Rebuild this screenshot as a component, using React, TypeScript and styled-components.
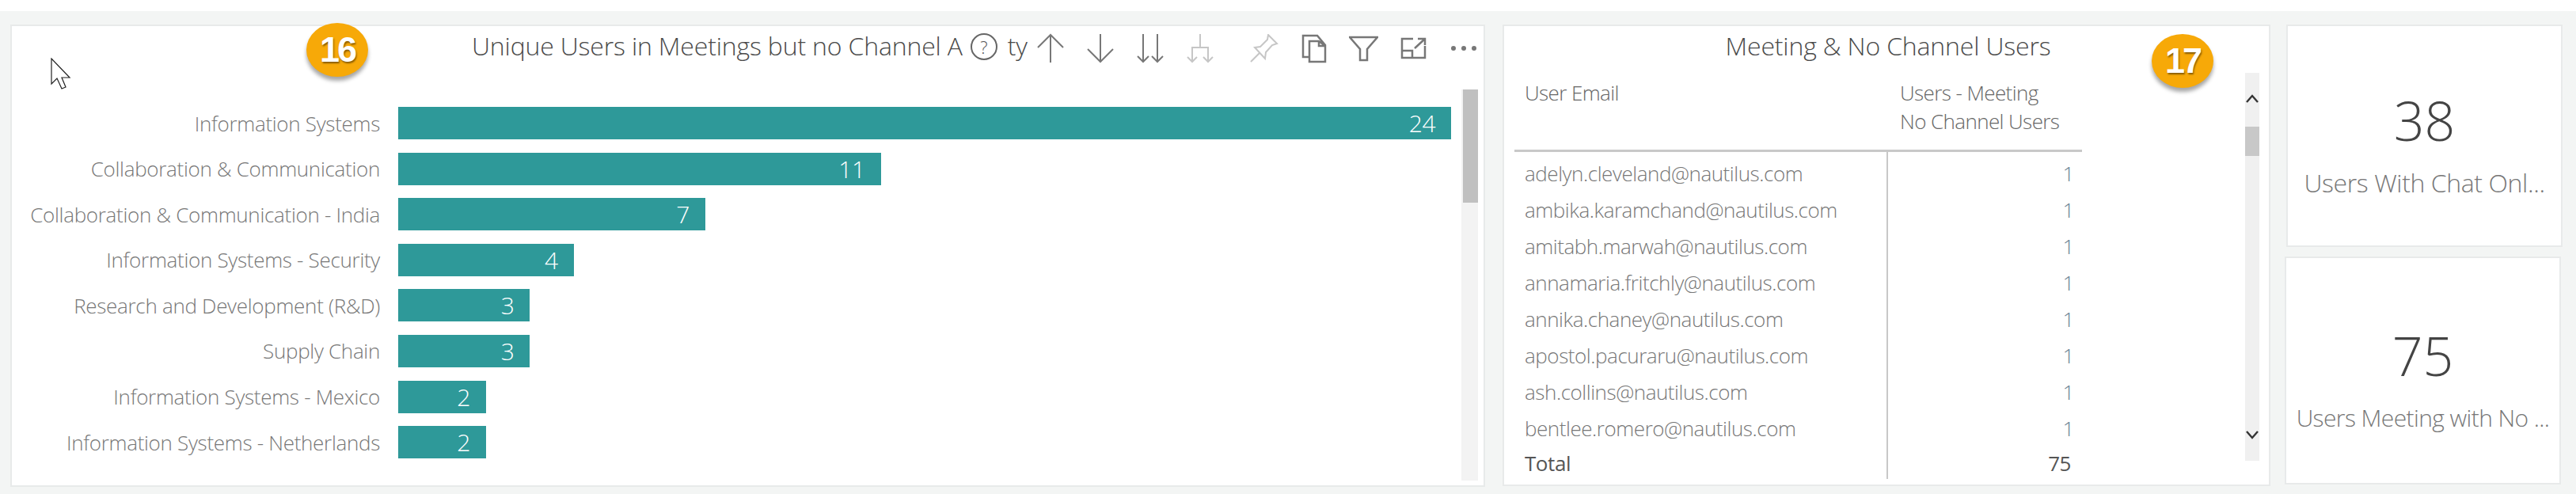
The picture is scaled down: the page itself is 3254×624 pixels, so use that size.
import React from "react";
import styled, { createGlobalStyle } from "styled-components";

const GlobalStyle = createGlobalStyle`
  html, body {
    margin: 0;
    padding: 0;
    background: #fff;
    font-family: "Open Sans", "Liberation Sans", sans-serif;
    font-weight: 300;
  }
`

const Page = styled.div`
  width: 3254px;
  height: 624px;
  padding-top: 14px;
  box-sizing: border-box;
  overflow: hidden;
`

const Canvas = styled.div`
  height: 610px;
  box-sizing: border-box;
  padding: 17px 0 0 13px;
  background: #f3f5f4;
  display: flex;
  align-items: flex-start;
`

const Panel = styled.section<{ $w: number; $h: number; $ml?: number }>`
  position: relative;
  width: ${p => p.$w}px;
  height: ${p => p.$h}px;
  margin-left: ${p => p.$ml ?? 0}px;
  box-sizing: border-box;
  background: #fff;
  border: 2px solid #e8eaea;
`

const ChartHeader = styled.header`
  height: 80px;
  box-sizing: border-box;
  padding: 3px 0 0 581px;
  display: flex;
  align-items: flex-start;
  font-size: 32px;
  line-height: 44px;
  color: #4a4a4a;
  letter-spacing: -0.17px;
  white-space: nowrap;
`

const HelpMark = styled.span`
  width: 34px;
  height: 34px;
  box-sizing: border-box;
  margin: 6px 13px 0 10px;
  border: 2px solid #666;
  border-radius: 50%;
  display: inline-flex;
  align-items: center;
  justify-content: center;
  font-size: 22px;
  line-height: 1;
  letter-spacing: 0;
  color: #555;
`

const Toolbar = styled.div`
  position: absolute;
  left: 1280px;
  top: 4px;
  display: flex;
  align-items: center;
`

const ToolSlot = styled.span<{ $after?: number }>`
  width: 63px;
  height: 48px;
  margin-right: ${p => p.$after ?? 0}px;
  display: flex;
  align-items: center;
  justify-content: center;
  flex: none;
`

const Badge = styled.div<{ $x: number; $y: number }>`
  position: absolute;
  left: ${p => p.$x}px;
  top: ${p => p.$y}px;
  width: 78px;
  height: 68px;
  border-radius: 50%;
  background: #f7a908;
  box-shadow: 0 5px 5px rgba(0, 0, 0, .35);
  display: flex;
  align-items: center;
  justify-content: center;
  font-family: "Liberation Sans", Arial, sans-serif;
  font-weight: 700;
  font-size: 45px;
  letter-spacing: -3px;
  color: #fff;
  text-shadow: 1px 2px 2px rgba(90, 60, 0, .7);
`

const Cursor = styled.svg`
  position: absolute;
  left: 49px;
  top: 40px;
`

const ChartBody = styled.div`
  display: flex;
  align-items: flex-start;
`

const BarList = styled.div`
  width: 1831px;
  padding-top: 22px;
  display: flex;
  flex-direction: column;
  gap: 16.6px;
`

const BarRow = styled.div`
  height: 41px;
  display: grid;
  grid-template-columns: 465px 1fr;
  column-gap: 23px;
  align-items: center;
`

const BarLabel = styled.span`
  text-align: right;
  font-size: 26px;
  letter-spacing: -0.3px;
  color: #777;
  white-space: nowrap;
`

const Bar = styled.div<{ $units: number }>`
  width: ${p => p.$units * 55.42}px;
  height: 41px;
  box-sizing: border-box;
  padding-right: 20px;
  background: #2e9999;
  color: #fff;
  display: flex;
  align-items: center;
  justify-content: flex-end;
  font-size: 30px;
  letter-spacing: -0.5px;
`

const ChartTrack = styled.div`
  width: 21px;
  height: 494px;
  box-sizing: border-box;
  padding-left: 2px;
  background: #f3f3f3;
`

const ChartThumb = styled.div`
  height: 143px;
  background: #c0c0c0;
`

const TableTitle = styled.h2`
  margin: 0;
  height: 49px;
  padding: 3px 0 0 4px;
  box-sizing: border-box;
  text-align: center;
  font-size: 32px;
  font-weight: 300;
  line-height: 44px;
  letter-spacing: -0.17px;
  color: #4a4a4a;
`

const TableBody = styled.div`
  display: flex;
  align-items: flex-start;
  padding-left: 13px;
`

const Table = styled.div`
  width: 717px;
  flex: none;
`

const HeadRow = styled.div`
  height: 110px;
  box-sizing: border-box;
  border-bottom: 3px solid #c8c8c8;
  display: grid;
  grid-template-columns: 474px 1fr;
  padding: 17px 0 0 13px;
  font-size: 26px;
  line-height: 36px;
  letter-spacing: -0.6px;
  color: #666;
`

const Row = styled.div<{ $total?: boolean }>`
  height: ${p => (p.$total ? 45 : 46)}px;
  display: grid;
  grid-template-columns: 472px 1fr;
  align-items: stretch;
  font-size: 26px;
  letter-spacing: -0.45px;
  font-weight: ${p => (p.$total ? 400 : 300)};
  color: ${p => (p.$total ? "#555" : "#777")};
`

const EmailCell = styled.div<{ $total?: boolean }>`
  padding: ${p => (p.$total ? 4 : 8)}px 0 0 13px;
  border-right: 2px solid #c8c8c8;
  display: flex;
  align-items: center;
`

const CountCell = styled.div<{ $total?: boolean }>`
  padding: ${p => (p.$total ? "4px 14px 0 0" : "8px 10px 0 0")};
  display: flex;
  align-items: center;
  justify-content: flex-end;
  color: ${p => (p.$total ? "#555" : "#6b7f92")};
`

const TableTrack = styled.div`
  width: 18px;
  height: 490px;
  margin: 10px 0 0 206px;
  box-sizing: border-box;
  padding: 27px 0;
  background: #f0f0f0;
  display: flex;
  flex-direction: column;
  align-items: center;
`

const TableThumb = styled.div`
  width: 18px;
  height: 37px;
  margin: 29px 0 auto;
  background: #c8c8c8;
`

const SideColumn = styled.div`
  margin-left: 18px;
  display: flex;
  flex-direction: column;
  gap: 12px;
`

const Card = styled.div<{ $h: number; $shift?: number }>`
  width: 349px;
  height: ${p => p.$h}px;
  margin-left: ${p => p.$shift ?? 0}px;
  box-sizing: border-box;
  padding-top: 31px;
  background: #fff;
  border: 2px solid #e8eaea;
  display: flex;
  flex-direction: column;
  align-items: center;
  justify-content: center;
`

const CardValue = styled.div`
  font-size: 68px;
  line-height: 84px;
  color: #444;
`

const CardLabel = styled.div<{ $small?: boolean }>`
  margin-top: 4px;
  font-size: ${p => (p.$small ? 30 : 32)}px;
  line-height: 66px;
  color: #777;
  white-space: nowrap;
  letter-spacing: ${p => (p.$small ? -0.6 : -0.4)}px;
`

const Tool = { stroke: "#777", strokeWidth: 2, fill: "none" }
const Faded = { stroke: "#c6c6c6", strokeWidth: 2, fill: "none" }

const ArrowUp = () => <svg width="34" height="38" viewBox="0 0 34 38" {...Tool}>
	<path d="M17 37V2M1 18 17 2 33 18"/>
</svg>

const ArrowDown = () => <svg width="34" height="38" viewBox="0 0 34 38" {...Tool}>
	<path d="M17 1V36M1 20 17 36 33 20"/>
</svg>

const DoubleDown = () => <svg width="34" height="38" viewBox="0 0 34 38" {...Tool}>
	<path d="M8 1V36M1 29 8 36 15 29M26 1V36M19 29 26 36 33 29"/>
</svg>

const DrillDown = () => <svg width="34" height="38" viewBox="0 0 34 38" {...Faded}>
	<path d="M17 1V18M7 36V18H27V36M1 30 7 36 13 30M21 30 27 36 33 30"/>
</svg>

const Pin = () => <svg width="36" height="36" viewBox="0 0 36 36" {...Faded}>
	<path d="M23 1 34 12 28 14 20 23 19 31 6 17 13 16 22 7ZM1 35 12 24"/>
</svg>

const Copy = () => <svg width="32" height="37" viewBox="0 0 32 37" {...Tool} strokeWidth={2.5}>
	<path d="M10 29H2V2H20L30 14V35H10V9H22L30 15M22 9V15H30"/>
</svg>

const Funnel = () => <svg width="37" height="33" viewBox="0 0 37 33" {...Tool} strokeWidth={2.5}>
	<path d="M1 2H36L23 17V31H14V17Z"/>
</svg>

const Focus = () => <svg width="33" height="28" viewBox="0 0 33 28" {...Tool} strokeWidth={2.5}>
	<path d="M16 2H2V26H31V11M2 17H15V26M18 14 31 2M22 2H31V10"/>
</svg>

const More = () => <svg width="32" height="8" viewBox="0 0 32 8" fill="#777">
	<circle cx="3" cy="4" r="3"/>
	<circle cx="16" cy="4" r="3"/>
	<circle cx="29" cy="4" r="3"/>
</svg>

const Chevron = ({flip}: {flip?: boolean}) => <svg width="16" height="12" viewBox="0 0 16 12" fill="none" stroke="#333" strokeWidth="2.4">
	<path d={flip ? "M1 2 8 10 15 2" : "M1 10 8 2 15 10"}/>
</svg>

const bars = [
	{label: "Information Systems", value: 24},
	{label: "Collaboration & Communication", value: 11},
	{label: "Collaboration & Communication - India", value: 7},
	{label: "Information Systems - Security", value: 4},
	{label: "Research and Development (R&D)", value: 3},
	{label: "Supply Chain", value: 3},
	{label: "Information Systems - Mexico", value: 2},
	{label: "Information Systems - Netherlands", value: 2},
]

const emails = [
	"adelyn.cleveland@nautilus.com",
	"ambika.karamchand@nautilus.com",
	"amitabh.marwah@nautilus.com",
	"annamaria.fritchly@nautilus.com",
	"annika.chaney@nautilus.com",
	"apostol.pacuraru@nautilus.com",
	"ash.collins@nautilus.com",
	"bentlee.romero@nautilus.com",
]

const App: React.FC = () => {
	return <Page>
		<GlobalStyle/>
		<Canvas>
			<Panel $w={1863} $h={584}>
				<ChartHeader>
					Unique Users in Meetings but no Channel A<HelpMark>?</HelpMark>ty
				</ChartHeader>
				<Toolbar>
					<ToolSlot><ArrowUp/></ToolSlot>
					<ToolSlot><ArrowDown/></ToolSlot>
					<ToolSlot><DoubleDown/></ToolSlot>
					<ToolSlot $after={18}><DrillDown/></ToolSlot>
					<ToolSlot><Pin/></ToolSlot>
					<ToolSlot><Copy/></ToolSlot>
					<ToolSlot><Funnel/></ToolSlot>
					<ToolSlot><Focus/></ToolSlot>
					<ToolSlot><More/></ToolSlot>
				</Toolbar>
				<Badge $x={372} $y={-4}>16</Badge>
				<Cursor width="26" height="40" viewBox="0 0 26 40" fill="#fff" stroke="#222" strokeWidth="1.2">
					<path d="M1 1V33L8 26 14 39 19 37 14 25H24Z"/>
				</Cursor>
				<ChartBody>
					<BarList>
						{bars.map(b => <BarRow key={b.label}>
							<BarLabel>{b.label}</BarLabel>
							<Bar $units={b.value}>{b.value}</Bar>
						</BarRow>)}
					</BarList>
					<ChartTrack><ChartThumb/></ChartTrack>
				</ChartBody>
			</Panel>
			<Panel $w={970} $h={583} $ml={22}>
				<TableTitle>Meeting &amp; No Channel Users</TableTitle>
				<Badge $x={818} $y={10}>17</Badge>
				<TableBody>
					<Table>
						<HeadRow>
							<span>User Email</span>
							<span>Users - Meeting<br/>No Channel Users</span>
						</HeadRow>
						{emails.map(e => <Row key={e}>
							<EmailCell>{e}</EmailCell>
							<CountCell>1</CountCell>
						</Row>)}
						<Row $total>
							<EmailCell $total>Total</EmailCell>
							<CountCell $total>75</CountCell>
						</Row>
					</Table>
					<TableTrack>
						<Chevron/>
						<TableThumb/>
						<Chevron flip/>
					</TableTrack>
				</TableBody>
			</Panel>
			<SideColumn>
				<Card $h={281} $shift={2}>
					<CardValue>38</CardValue>
					<CardLabel>Users With Chat Onl...</CardLabel>
				</Card>
				<Card $h={288}>
					<CardValue>75</CardValue>
					<CardLabel $small>Users Meeting with No ...</CardLabel>
				</Card>
			</SideColumn>
		</Canvas>
	</Page>
}

export default App
